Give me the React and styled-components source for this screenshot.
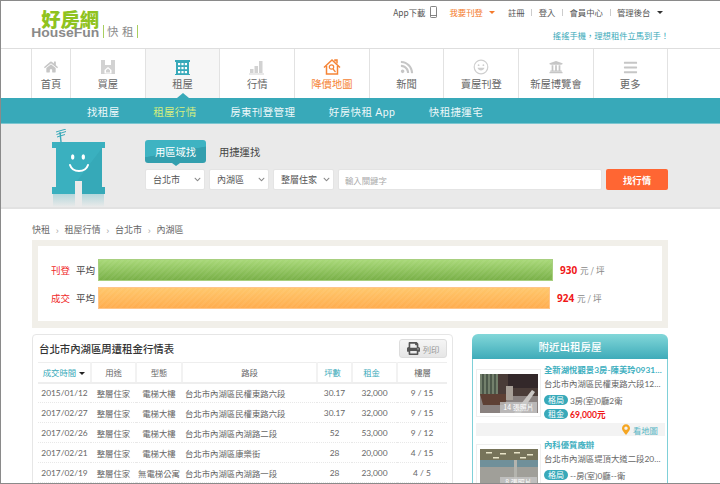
import React from 'react';
import styled, { createGlobalStyle } from 'styled-components';
import { FaHome, FaRss, FaUniversity, FaBars, FaPrint, FaMapMarkerAlt, FaChevronDown } from 'react-icons/fa';

const TEAL = '#38a9b9';
const CJK = '"Noto Sans CJK TC", sans-serif';
const LATIN = 'Lato, "Noto Sans CJK TC", sans-serif';

const GlobalStyle = createGlobalStyle`
  html, body {
    margin: 0;
    padding: 0;
    background: #fff;
  }
  body {
    font-family: ${LATIN};
    color: #555;
    font-size: 10px;
  }
  * {
    box-sizing: border-box;
  }
`;

const Page = styled.div`
  width: 720px;
  height: 484px;
  overflow: hidden;
  border-left: 1px solid #8a8a8a;
  border-top: 1px solid #8a8a8a;
  border-bottom: 1px solid #8a8a8a;
`;

const Header = styled.header`
  height: 48px;
  display: flex;
  justify-content: space-between;
  padding: 0 51px 0 30px;
  border-bottom: 1px solid #dedede;
`;

const Logo = styled.div`
  padding-top: 9px;
  display: flex;
  align-items: flex-end;
  height: 37px;
`;

const LogoMark = styled.div`
  display: flex;
  flex-direction: column;
  align-items: flex-end;
  width: 68px;
`;

const LogoName = styled.span`
  font-family: ${CJK};
  font-weight: 900;
  font-size: 19.3px;
  line-height: 18px;
  color: #8fc31f;
`;

const LogoLatin = styled.span`
  font-family: "Liberation Sans", sans-serif;
  font-weight: 700;
  font-size: 12.5px;
  line-height: 10px;
  color: #8a8a8a;
  transform: scaleX(1.11);
  transform-origin: right;
`;

const LogoSub = styled.span`
  font-family: ${CJK};
  font-size: 11.5px;
  line-height: 13px;
  letter-spacing: 3.5px;
  margin-left: 4px;
  color: #8c8c8c;
  padding: 0 0 0 3px;
  border-left: 1px solid #a9cf5f;
  border-right: 1px solid #a9cf5f;
`;

const TopLinksColumn = styled.div`
  display: flex;
  flex-direction: column;
  align-items: flex-end;
`;

const TopLinks = styled.nav`
  display: flex;
  align-items: center;
  height: 12px;
  margin-top: 5px;
`;

const TopLink = styled.a`
  display: flex;
  align-items: center;
  gap: 4px;
  font-family: ${CJK};
  font-size: 8.4px;
  line-height: 12px;
  color: ${p => (p.$hot ? '#f47a2c' : '#555')};
  padding: 0 6.5px;
  & + &::before {
    content: '';
    width: 1px;
    height: 7px;
    background: #ccc;
    margin: 0 2.5px 0 -6.5px;
  }
`;

const Caret = styled.i`
  width: 0;
  height: 0;
  margin-left: 2px;
  border: 3px solid transparent;
  border-top: 3px solid ${p => p.$color};
  border-bottom: 0;
`;

const Tagline = styled.div`
  margin-top: 11px;
  font-family: ${CJK};
  font-size: 8.3px;
  line-height: 12px;
  color: ${TEAL};
`;

const MainNav = styled.nav`
  display: grid;
  grid-template-columns: 39px repeat(8, 74.7px);
  height: 49px;
  margin-left: 30px;
  width: 637px;
`;

const NavCell = styled.a`
  display: flex;
  flex-direction: column;
  align-items: center;
  padding-top: 9px;
  border-left: 1px solid #e2e2e2;
  background: ${p => (p.$active ? '#f6f6f6' : '#fff')};
  font-family: ${CJK};
  font-size: 10.3px;
  line-height: 14px;
  color: ${p => (p.$hot ? '#f58436' : '#666')};
  position: relative;
  &:last-child {
    border-right: 1px solid #e2e2e2;
  }
  ${p => p.$active && `
    &::after {
      content: '';
      position: absolute;
      left: 50%;
      bottom: 0;
      margin-left: -6px;
      border: 6px solid transparent;
      border-top: 0;
      border-bottom: 5px solid ${TEAL};
    }
  `}
`;

const NavIcon = styled.span`
  height: 18px;
  margin-bottom: 1px;
  display: flex;
  align-items: center;
  justify-content: center;
  color: #c6c6c6;
`;

const SubNav = styled.nav`
  height: 26px;
  background: ${TEAL};
  display: flex;
  align-items: center;
  gap: 33.6px;
  padding: 1px 0 0 86px;
  border-bottom: 1px solid #7cc6d0;
`;

const SubLink = styled.a`
  font-family: ${LATIN};
  font-size: 10.5px;
  letter-spacing: 0.35px;
  color: ${p => (p.$active ? '#d6ee7e' : '#eef8fa')};
`;

const SearchBand = styled.section`
  height: 85px;
  background: #eaeaea;
  border-bottom: 2px solid #e2e2e2;
  display: flex;
  padding: 5px 0 0 51px;
`;

const Mascot = styled.svg`
  display: block;
  width: 54px;
  height: 78px;
`;

const SearchBody = styled.div`
  margin-left: 39px;
  padding-top: 11px;
  width: 523px;
`;

const SearchTabs = styled.div`
  display: flex;
  align-items: center;
  height: 23px;
`;

const SearchTab = styled.button`
  border: 0;
  padding: 0;
  font-family: ${CJK};
  font-size: 10.3px;
  height: 23px;
  width: ${p => (p.$active ? '61px' : 'auto')};
  margin-right: 13px;
  border-radius: 3px;
  position: relative;
  color: ${p => (p.$active ? '#fff' : '#444')};
  background: ${p => (p.$active ? 'linear-gradient(170deg, #3eb3c2 50%, #339fae 52%)' : 'transparent')};
  ${p => p.$active && `
    &::after {
      content: '';
      position: absolute;
      left: 27px;
      bottom: -3px;
      border: 4px solid transparent;
      border-bottom: 0;
      border-top: 3px solid #339fae;
    }
  `}
`;

const SearchRow = styled.div`
  display: flex;
  gap: 4px;
  margin-top: 6px;
  height: 21px;
`;

const SelectBox = styled.div`
  width: ${p => p.$width}px;
  height: 21px;
  background: #fff;
  border: 1px solid #e4e4e4;
  border-radius: 2px;
  display: flex;
  align-items: center;
  justify-content: space-between;
  padding: 0 3px 0 7px;
  font-family: ${CJK};
  font-size: 9px;
  color: #555;
  svg {
    color: #8a8a8a;
    width: 7px;
    height: 7px;
  }
`;

const Keyword = styled.input`
  width: 264px;
  height: 21px;
  background: #fff;
  border: 1px solid #e4e4e4;
  border-radius: 2px;
  padding: 0 6px;
  font-family: ${CJK};
  font-size: 8.4px;
  outline: none;
  &::placeholder {
    color: #aaa;
  }
`;

const SearchButton = styled.button`
  width: 62px;
  height: 21px;
  border: 0;
  border-radius: 2px;
  background: #ff6633;
  color: #fff;
  font-family: ${CJK};
  font-size: 9.4px;
  font-weight: 700;
`;

const Content = styled.main`
  width: 636px;
  margin-left: 31px;
`;

const Crumbs = styled.div`
  height: 31px;
  display: flex;
  align-items: flex-end;
  padding-bottom: 4px;
  font-family: ${CJK};
  font-size: 9px;
  color: #666;
`;

const CrumbSep = styled.span`
  width: 14.5px;
  text-align: center;
  color: #aaa;
  font-size: 9px;
  font-family: "Liberation Sans", sans-serif;
`;

const Summary = styled.section`
  height: 88px;
  background: #f1efe9;
  padding: 6px;
`;

const SummaryInner = styled.div`
  height: 75px;
  background: #fff;
  padding: 13px 0 0 13px;
  display: flex;
  flex-direction: column;
  gap: 6px;
`;

const BarRow = styled.div`
  display: flex;
  align-items: center;
  height: 22px;
  font-family: ${CJK};
  font-size: 9.5px;
  color: #444;
`;

const BarKind = styled.span`
  color: #f02b2b;
  width: 25px;
`;

const BarLabel = styled.span`
  width: 22px;
`;

const Bar = styled.div`
  height: 22px;
  width: ${p => p.$width}px;
  border: 1px solid ${p => (p.$tone === 'green' ? '#a8cf80' : '#ffc58a')};
  background:
    repeating-linear-gradient(135deg, rgba(255, 255, 255, 0.05) 0 2px, rgba(255, 255, 255, 0) 2px 4px),
    ${p => (p.$tone === 'green'
      ? 'linear-gradient(#a8d878, #79b048)'
      : 'linear-gradient(#ffc76b, #ffad4f)')};
`;

const BarValue = styled.span`
  margin-left: 7px;
  color: #888;
  font-size: 8.6px;
  b {
    font-family: "Open Sans", sans-serif;
    color: #f01818;
    font-size: 10px;
    margin-right: 1px;
  }
`;

const Columns = styled.div`
  display: flex;
  justify-content: space-between;
  align-items: flex-start;
  margin-top: 6px;
`;

const TablePanel = styled.section`
  width: 421px;
  height: 160px;
  border: 1px solid #e6e6e6;
  border-radius: 4px;
  padding: 0 5px;
`;

const PanelHead = styled.div`
  height: 27px;
  display: flex;
  align-items: center;
  justify-content: space-between;
`;

const PanelTitle = styled.h2`
  margin: 0;
  font-family: ${CJK};
  font-weight: 500;
  font-size: 10.4px;
  color: #333;
  padding-left: 1px;
`;

const PrintButton = styled.button`
  width: 48px;
  height: 19px;
  border: 1px solid #ddd;
  border-radius: 3px;
  background: linear-gradient(#f5f5f5, #e6e6e6);
  display: flex;
  align-items: center;
  justify-content: center;
  gap: 3px;
  padding: 0;
  color: #999;
  font-family: ${CJK};
  font-size: 8.4px;
  svg {
    color: #555;
    width: 13px;
    height: 13px;
  }
`;

const Table = styled.table`
  width: 409px;
  table-layout: fixed;
  border-collapse: collapse;
  font-size: 8.4px;
  color: #666;
  th, td {
    padding: 0;
    text-align: center;
    white-space: nowrap;
    font-weight: 400;
  }
  thead th {
    height: 20px;
    font-family: ${CJK};
    font-size: 8.4px;
    border-top: 1px solid #eee;
    border-bottom: 2px solid #eee;
    border-left: 2px solid #f2f2f2;
    color: #666;
  }
  thead th:first-child {
    border-left: 0;
  }
  tbody td {
    height: 20px;
    border-bottom: 1px dotted #e8e8e8;
    font-family: ${LATIN};
  }
  .road {
    text-align: left;
    padding-left: 3px;
  }
`;

const SortHead = styled.span`
  color: ${TEAL};
  margin-right: ${p => p.$shift || 0}px;
`;

const SortCaret = styled.i`
  display: inline-block;
  margin-left: 3px;
  vertical-align: middle;
  border: 3px solid transparent;
  border-top: 3px solid #222;
  border-bottom: 0;
`;

const Sidebar = styled.aside`
  width: 196px;
`;

const SideHead = styled.h3`
  margin: 0;
  height: 25px;
  border-radius: 6px 6px 0 0;
  background: linear-gradient(#82d7d9, #3eabb9);
  color: #fff;
  font-family: ${CJK};
  font-weight: 500;
  font-size: 10.5px;
  line-height: 25px;
  text-align: center;
`;

const SideBody = styled.div`
  border: 1px solid #7fd0d8;
  border-top: 0;
  padding: 10px 2px 0 3px;
  height: 140px;
`;

const Listing = styled.article`
  display: flex;
  gap: 3px;
  height: 54px;
`;

const PhotoFrame = styled.div`
  width: 65px;
  height: 48px;
  flex: none;
  border: 1px solid #efefef;
  padding: 4px 3px;
  position: relative;
`;

const Photo = styled.svg`
  display: block;
  width: 58px;
  height: 39px;
`;

const PhotoCount = styled.span`
  position: absolute;
  right: 3px;
  bottom: 3px;
  width: 37px;
  height: 11px;
  background: rgba(200, 200, 200, 0.78);
  color: #fff;
  font-family: ${CJK};
  font-size: 7px;
  line-height: 11px;
  text-align: center;
`;

const ListingText = styled.div`
  width: 121px;
  min-width: 0;
  margin-top: -5px;
`;

const ListingTitle = styled.div`
  font-family: ${LATIN};
  font-weight: 700;
  font-size: 8.4px;
  line-height: 12px;
  color: #3fb0bf;
  white-space: nowrap;
  overflow: hidden;
  text-overflow: ellipsis;
`;

const ListingAddress = styled.div`
  margin-top: 1px;
  font-family: ${LATIN};
  font-size: 8.4px;
  line-height: 14px;
  color: #666;
  white-space: nowrap;
  overflow: hidden;
  text-overflow: ellipsis;
`;

const Spec = styled.div`
  display: flex;
  align-items: center;
  gap: 2px;
  height: 14px;
  margin-top: ${p => (p.$first ? '2px' : '0')};
  font-family: ${LATIN};
  font-size: 8.4px;
  color: #666;
`;

const Pill = styled.span`
  width: 24px;
  height: 10px;
  border-radius: 5px;
  background: ${TEAL};
  color: #fff;
  font-family: ${CJK};
  font-size: 8px;
  line-height: 10px;
  text-align: center;
`;

const Price = styled.span`
  color: #f01818;
  font-weight: 700;
  font-size: 8.6px;
`;

const MapStrip = styled.div`
  height: 13px;
  margin: 0 0 8px;
  background: #f3f3f3;
  display: flex;
  align-items: center;
  justify-content: flex-end;
  gap: 3px;
  padding-right: 7px;
  font-family: ${CJK};
  font-size: 8.4px;
  color: #58b6c4;
  svg {
    color: #f5a623;
    width: 8px;
    height: 11px;
  }
`;

const BuyIcon = () => (
  <svg width="16" height="16" viewBox="0 0 16 16" fill="#d2d2d2">
    <path d="M1 1h4v5h6V1h4v14H1z" />
    <path d="M8 8l3.500 3v3.500h-7V11z" fill="#fff" />
    <path d="M8 9.500l2 1.800v2.200H6v-2.200z" />
  </svg>
);

const RentIcon = () => (
  <svg width="17" height="17" viewBox="0 0 17 17" fill="#38a9b9">
    <path d="M1 1h15v2h-1v12h1v1H1v-1h1V3H1z" />
    <g fill="#fff">
      <rect x="4" y="4" width="2.200" height="2.200" />
      <rect x="7.400" y="4" width="2.200" height="2.200" />
      <rect x="10.800" y="4" width="2.200" height="2.200" />
      <rect x="4" y="8" width="2.200" height="2.200" />
      <rect x="7.400" y="8" width="2.200" height="2.200" />
      <rect x="10.800" y="8" width="2.200" height="2.200" />
      <rect x="4" y="12" width="2.200" height="2.200" />
      <rect x="7.400" y="12" width="2.200" height="2.200" />
      <rect x="10.800" y="12" width="2.200" height="2.200" />
    </g>
  </svg>
);

const TrendIcon = () => (
  <svg width="16" height="16" viewBox="0 0 16 16" fill="#d2d2d2">
    <rect x="1" y="10" width="3.500" height="4" />
    <rect x="5.500" y="7" width="3.500" height="7" />
    <rect x="10" y="2" width="3.500" height="12" />
    <rect x="0" y="14.500" width="15" height="1" />
  </svg>
);

const MapHouseIcon = () => (
  <svg width="18" height="18" viewBox="0 0 18 18" fill="none" stroke="#f58436" strokeWidth="1.500">
    <path d="M1 9.500L9 2l8 7.500" />
    <path d="M3.500 8v8h11V8" />
    <path d="M12 3.500V2h2v3.500" />
    <circle cx="8.500" cy="9" r="2.200" strokeWidth="1.200" />
    <path d="M10 11l2.500 3" strokeWidth="1.200" />
  </svg>
);

const SmileIcon = () => (
  <svg width="16" height="16" viewBox="0 0 16 16" fill="none" stroke="#cfcfcf" strokeWidth="1.200">
    <circle cx="8" cy="8" r="6.800" />
    <circle cx="5.600" cy="6.200" r="0.900" fill="#cfcfcf" stroke="none" />
    <circle cx="10.400" cy="6.200" r="0.900" fill="#cfcfcf" stroke="none" />
    <path d="M4.500 8.800c1 3.500 6 3.500 7 0z" fill="#cfcfcf" stroke="none" />
  </svg>
);

const PhoneIcon = () => (
  <svg width="7" height="12" viewBox="0 0 7 12" fill="none" stroke="#666" strokeWidth="0.800">
    <rect x="0.500" y="0.500" width="6" height="11" rx="0.800" />
    <path d="M0.500 9.500h6" />
  </svg>
);

const MascotArt = () => (
  <Mascot viewBox="0 0 54 78">
    <defs>
      <linearGradient id="fade" x1="0" y1="0" x2="0" y2="1">
        <stop offset="0" stopColor="#38a9b9" stopOpacity="0.3" />
        <stop offset="1" stopColor="#38a9b9" stopOpacity="0" />
      </linearGradient>
    </defs>
    <g stroke="#38a9b9" strokeWidth="1" fill="none">
      <path d="M9 13L8 3" strokeWidth="1.400" />
      <path d="M4 3l10-3M4.500 5.500l9.500-3M5 8l8-2.500" />
    </g>
    <path d="M0 13h53v6h-3v39h3v7H30V52h-7v13H0v-7h4V19H0z" fill="#3ab0bf" />
    <path d="M50 19v39h3v7H30V52h-5z" fill="#36a9b8" />
    <path d="M1 65h22v13H1zM30 65h22v13H30z" fill="url(#fade)" />
    <ellipse cx="20.700" cy="28" rx="1.700" ry="2.800" fill="#fff" />
    <ellipse cx="31.300" cy="28" rx="1.700" ry="2.800" fill="#fff" />
    <path d="M18 36c2.500 8 15.500 8 18 0" fill="none" stroke="#fff" strokeWidth="2" strokeLinecap="round" />
  </Mascot>
);

const LobbyPhoto = () => (
  <Photo viewBox="0 0 58 39" preserveAspectRatio="none">
    <rect width="58" height="39" fill="#4a3c38" />
    <rect x="0" y="0" width="18" height="22" fill="#73806c" />
    <path d="M3 0v22M7 0v22M11 0v22M15 0v22" stroke="#39443a" strokeWidth="1.300" />
    <rect x="28" y="0" width="30" height="14" fill="#33282a" />
    <rect x="0" y="22" width="58" height="17" fill="#8a8280" />
    <path d="M0 20h28l-3 11H3z" fill="#5e4034" />
    <path d="M34 39L52 16l3 2-14 21z" fill="#c9c6c3" />
    <rect x="26" y="12" width="7" height="14" fill="#a8a098" />
  </Photo>
);

const OfficePhoto = () => (
  <Photo viewBox="0 0 58 39" preserveAspectRatio="none">
    <rect width="58" height="39" fill="#a09f99" />
    <rect width="58" height="11" fill="#77745a" />
    <g fill="#e8e4c8">
      <rect x="6" y="3" width="6" height="1.500" />
      <rect x="20" y="4" width="6" height="1.500" />
      <rect x="34" y="3" width="6" height="1.500" />
      <rect x="47" y="5" width="6" height="1.500" />
      <rect x="13" y="8" width="6" height="1.500" />
      <rect x="40" y="8" width="6" height="1.500" />
    </g>
    <rect y="11" width="58" height="7" fill="#70909a" />
    <rect x="34" y="11" width="3" height="28" fill="#b4b4ae" />
  </Photo>
);

const navItems = [
  { label: '首頁', icon: <FaHome size={14} /> },
  { label: '買屋', icon: <BuyIcon /> },
  { label: '租屋', icon: <RentIcon />, active: true },
  { label: '行情', icon: <TrendIcon /> },
  { label: '降價地圖', icon: <MapHouseIcon />, hot: true },
  { label: '新聞', icon: <FaRss size={14} /> },
  { label: '賣屋刊登', icon: <SmileIcon /> },
  { label: '新屋博覽會', icon: <FaUniversity size={14} /> },
  { label: '更多', icon: <FaBars size={15} /> },
];

const subLinks = ['找租屋', '租屋行情', '房東刊登管理', '好房快租 App', '快租捷運宅'];

const rows = [
  ['2015/01/12', '整層住家', '電梯大樓', '台北市內湖區民權東路六段', '30.17', '32,000', '9 / 15'],
  ['2017/02/27', '整層住家', '電梯大樓', '台北市內湖區民權東路六段', '30.17', '32,000', '9 / 15'],
  ['2017/02/26', '整層住家', '電梯大樓', '台北市內湖區內湖路二段', '52', '53,000', '9 / 12'],
  ['2017/02/21', '整層住家', '電梯大樓', '台北市內湖區康樂街', '28', '20,000', '4 / 15'],
  ['2017/02/19', '整層住家', '無電梯公寓', '台北市內湖區內湖路一段', '28', '23,000', '4 / 5'],
];

const crumbs = ['快租', '租屋行情', '台北市', '內湖區'];

const App = () => {
  return (
    <Page>
      <GlobalStyle />
      <Header>
        <Logo>
          <LogoMark>
            <LogoName>好房網</LogoName>
            <LogoLatin>HouseFun</LogoLatin>
          </LogoMark>
          <LogoSub>快租</LogoSub>
        </Logo>
        <TopLinksColumn>
          <TopLinks>
            <TopLink>App下載 <PhoneIcon /></TopLink>
            <TopLink $hot>我要刊登<Caret $color="#f47a2c" /></TopLink>
            <TopLink>註冊</TopLink>
            <TopLink>登入</TopLink>
            <TopLink>會員中心</TopLink>
            <TopLink>管理後台<Caret $color="#333" /></TopLink>
          </TopLinks>
          <Tagline>搖搖手機，理想租件立馬到手！</Tagline>
        </TopLinksColumn>
      </Header>

      <MainNav>
        {navItems.map(item => (
          <NavCell key={item.label} $active={item.active} $hot={item.hot}>
            <NavIcon>{item.icon}</NavIcon>
            {item.label}
          </NavCell>
        ))}
      </MainNav>

      <SubNav>
        {subLinks.map(link => (
          <SubLink key={link} $active={link === '租屋行情'}>{link}</SubLink>
        ))}
      </SubNav>

      <SearchBand>
        <MascotArt />
        <SearchBody>
          <SearchTabs>
            <SearchTab $active>用區域找</SearchTab>
            <SearchTab>用捷運找</SearchTab>
          </SearchTabs>
          <SearchRow>
            <SelectBox $width={60}>台北市 <FaChevronDown /></SelectBox>
            <SelectBox $width={60}>內湖區 <FaChevronDown /></SelectBox>
            <SelectBox $width={61}>整層住家 <FaChevronDown /></SelectBox>
            <Keyword placeholder="輸入關鍵字" />
            <SearchButton>找行情</SearchButton>
          </SearchRow>
        </SearchBody>
      </SearchBand>

      <Content>
        <Crumbs>
          {crumbs.map((crumb, i) => (
            <React.Fragment key={crumb}>
              {i > 0 && <CrumbSep>›</CrumbSep>}
              {crumb}
            </React.Fragment>
          ))}
        </Crumbs>

        <Summary>
          <SummaryInner>
            <BarRow>
              <BarKind>刊登</BarKind>
              <BarLabel>平均</BarLabel>
              <Bar $tone="green" $width={455} />
              <BarValue><b>930</b> 元 / 坪</BarValue>
            </BarRow>
            <BarRow>
              <BarKind>成交</BarKind>
              <BarLabel>平均</BarLabel>
              <Bar $tone="orange" $width={452} />
              <BarValue><b>924</b> 元 / 坪</BarValue>
            </BarRow>
          </SummaryInner>
        </Summary>

        <Columns>
          <TablePanel>
            <PanelHead>
              <PanelTitle>台北市內湖區周遭租金行情表</PanelTitle>
              <PrintButton><FaPrint /> 列印</PrintButton>
            </PanelHead>
            <Table>
              <colgroup>
                <col width="53" />
                <col width="45" />
                <col width="46" />
                <col width="135" />
                <col width="35" />
                <col width="45" />
                <col width="50" />
              </colgroup>
              <thead>
                <tr>
                  <th><SortHead>成交時間</SortHead><SortCaret /></th>
                  <th>用途</th>
                  <th>型態</th>
                  <th>路段</th>
                  <th><SortHead $shift={4}>坪數</SortHead></th>
                  <th><SortHead $shift={6}>租金</SortHead></th>
                  <th>樓層</th>
                </tr>
              </thead>
              <tbody>
                {rows.map(row => (
                  <tr key={row[0]}>
                    {row.map((cell, i) => (
                      <td key={i} className={i === 3 ? 'road' : undefined}>{cell}</td>
                    ))}
                  </tr>
                ))}
              </tbody>
            </Table>
          </TablePanel>

          <Sidebar>
            <SideHead>附近出租房屋</SideHead>
            <SideBody>
              <Listing>
                <PhotoFrame>
                  <LobbyPhoto />
                  <PhotoCount>14 張照片</PhotoCount>
                </PhotoFrame>
                <ListingText>
                  <ListingTitle>全新湖悅觀景3房-陳美玲0931123456</ListingTitle>
                  <ListingAddress>台北市內湖區民權東路六段123號</ListingAddress>
                  <Spec $first><Pill>格局</Pill>3房(室)0廳2衛</Spec>
                  <Spec><Pill>租金</Pill><Price>69,000元</Price></Spec>
                </ListingText>
              </Listing>
              <MapStrip><FaMapMarkerAlt /> 看地圖</MapStrip>
              <Listing>
                <PhotoFrame>
                  <OfficePhoto />
                  <PhotoCount>8 張照片</PhotoCount>
                </PhotoFrame>
                <ListingText>
                  <ListingTitle>內科優質廠辦</ListingTitle>
                  <ListingAddress>台北市內湖區堤頂大道二段200號</ListingAddress>
                  <Spec $first><Pill>格局</Pill>--房(室)0廳--衛</Spec>
                </ListingText>
              </Listing>
            </SideBody>
          </Sidebar>
        </Columns>
      </Content>
    </Page>
  );
};

export default App;
